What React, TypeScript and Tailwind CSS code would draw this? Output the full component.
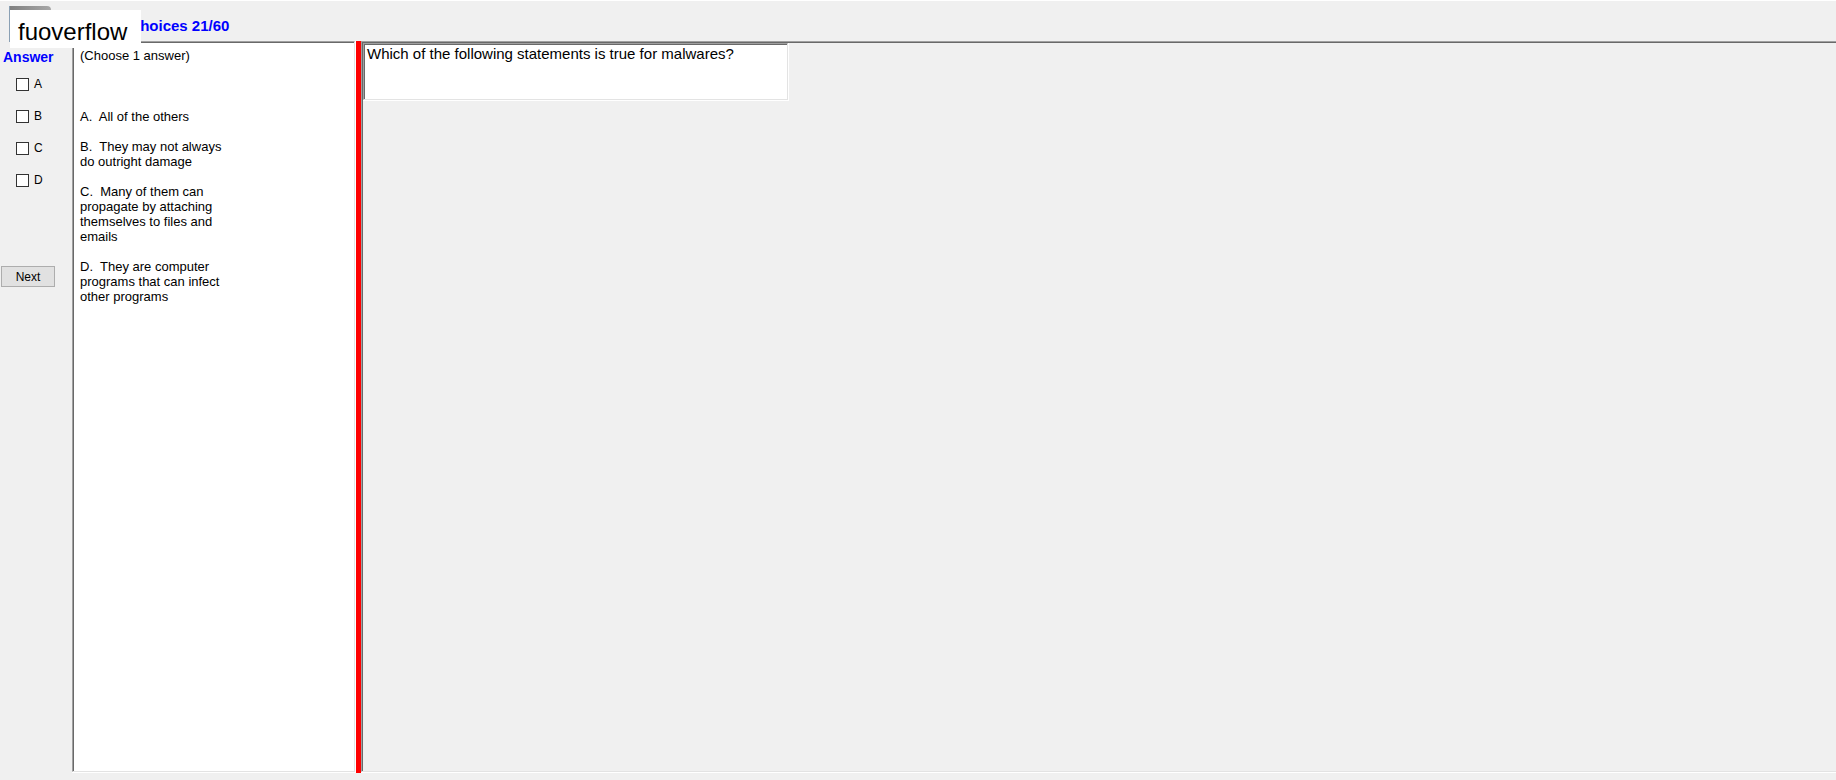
const options = [
  { letter: 'A', text: 'All of the others' },
  { letter: 'B', text: 'They may not always do outright damage' },
  { letter: 'C', text: 'Many of them can propagate by attaching themselves to files and emails' },
  { letter: 'D', text: 'They are computer programs that can infect other programs' },
];

function Header() {
  return (
    <header className="relative h-[41px] shrink-0 border-t border-white">
      <div className="absolute top-[5px] left-[9px] h-9 w-[42px] rounded-tr-sm border-l border-[#8aa0b4] bg-linear-to-r from-[#808080] to-[#a8a8a8]" />
      <h1 className="pt-[15px] pl-[71px] text-[15px] leading-5 font-bold text-[#0000ff]">Multiple choices 21/60</h1>
      <div className="absolute top-[9px] left-[10px] z-10 h-[38px] w-[131px] bg-white pl-2 text-[24px] leading-[44px]">
        fuoverflow
      </div>
    </header>
  );
}

function AnswerColumn() {
  return (
    <aside className="w-[72px] shrink-0 pt-[7px]">
      <h2 className="pl-[3px] text-[14px] leading-[18px] font-bold text-[#0000ff]">Answer</h2>
      <div className="flex flex-col gap-4 pt-[10px] pl-4">
        {options.map(({ letter }) => (
          <label key={letter} className="flex h-4 items-center gap-[5px] text-[12px]">
            <input type="checkbox" className="size-[13px] appearance-none border border-[#333333] bg-white checked:bg-[#333333]" />
            {letter}
          </label>
        ))}
      </div>
      <button type="button" className="mt-[78px] ml-px h-[21px] w-[54px] border border-[#adadad] bg-[#e1e1e1] text-[12px]">
        Next
      </button>
    </aside>
  );
}

function OptionsPanel() {
  return (
    <section className="w-[284px] shrink-0 border-r border-b border-white">
      <div className="h-full border border-t-[#a0a0a0] border-l-[#a0a0a0] border-r-[#e3e3e3] border-b-[#e3e3e3]">
        <div className="h-full border-t border-l border-[#696969] bg-white pt-[5px] pl-[6px] text-[13px] leading-[15px]">
          <p className="mb-[46px]">(Choose 1 answer)</p>
          {options.map(({ letter, text }) => (
            <p key={letter} className="mb-[15px] w-[150px]">
              {`${letter}.\u00a0 ${text}`}
            </p>
          ))}
        </div>
      </div>
    </section>
  );
}

function QuestionPanel() {
  return (
    <main className="min-w-0 flex-1 border-b border-white">
      <div className="h-full border-t border-l border-b border-t-[#a0a0a0] border-l-[#a0a0a0] border-b-[#e3e3e3]">
        <div className="h-full border-t border-l border-[#696969]">
          <div className="h-[58px] w-[426px] border-r border-b border-white">
            <div className="h-full border border-t-[#a0a0a0] border-l-[#a0a0a0] border-r-[#e3e3e3] border-b-[#e3e3e3]">
              <p className="h-full border-t border-l border-[#696969] bg-white pl-[2px] text-[15px] leading-[18px]">
                Which of the following statements is true for malwares?
              </p>
            </div>
          </div>
        </div>
      </div>
    </main>
  );
}

export default function App() {
  return (
    <div className="flex h-screen flex-col bg-[#f0f0f0] pb-[7px] font-['Liberation_Sans',Arial,sans-serif] text-black">
      <Header />
      <div className="flex min-h-0 flex-1">
        <AnswerColumn />
        <OptionsPanel />
        <div className="w-[5px] shrink-0 bg-[#ff0000]" />
        <QuestionPanel />
      </div>
    </div>
  );
}
